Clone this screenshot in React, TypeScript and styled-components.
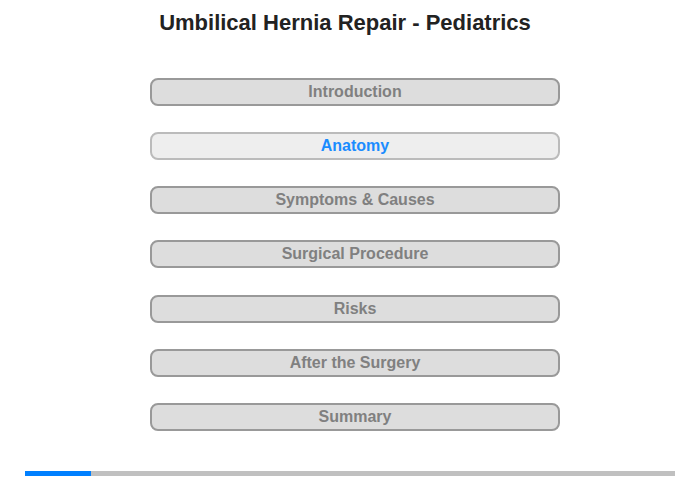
import styled, { createGlobalStyle } from "styled-components";

type Section = {
  title: string;
  active?: boolean;
};

const SECTIONS: Section[] = [
  { title: "Introduction" },
  { title: "Anatomy", active: true },
  { title: "Symptoms & Causes" },
  { title: "Surgical Procedure" },
  { title: "Risks" },
  { title: "After the Surgery" },
  { title: "Summary" },
];

const PROGRESS = 66 / 650;

const GlobalStyle = createGlobalStyle`
  body {
    margin: 0;
    background: #ffffff;
    font-family: "Liberation Sans", Arial, sans-serif;
  }
`;

export default function App() {
  return (
    <Page>
      <GlobalStyle />
      <Title>Umbilical Hernia Repair - Pediatrics</Title>
      <Menu>
        {SECTIONS.map((s) => (
          <MenuButton key={s.title} $active={!!s.active}>
            {s.title}
          </MenuButton>
        ))}
      </Menu>
      <ProgressTrack>
        <ProgressFill style={{ width: `${PROGRESS * 100}%` }} />
      </ProgressTrack>
    </Page>
  );
}

const Page = styled.div`
  width: 700px;
  height: 480px;
  display: flex;
  flex-direction: column;
  align-items: center;
`;

const Title = styled.h1`
  margin: 11px 10px 0 0;
  font-size: 22px;
  line-height: 24px;
  font-weight: bold;
  color: #222222;
`;

const Menu = styled.div`
  margin: 43px 0 0 10px;
  display: flex;
  flex-direction: column;
  gap: 26.17px;
`;

const MenuButton = styled.div<{ $active: boolean }>`
  box-sizing: border-box;
  width: 410px;
  height: 28px;
  border: 2px solid ${(p) => (p.$active ? "#bbbbbb" : "#999999")};
  border-radius: 8px;
  background: ${(p) => (p.$active ? "#eeeeee" : "#dddddd")};
  color: ${(p) => (p.$active ? "#1a8cff" : "#808080")};
  font-size: 16px;
  font-weight: bold;
  line-height: 24px;
  text-align: center;
  cursor: pointer;
`;

const ProgressTrack = styled.div`
  margin-top: auto;
  margin-bottom: 4px;
  width: 650px;
  height: 5px;
  background: #c0c0c0;
`;

const ProgressFill = styled.div`
  height: 100%;
  background: #0080ff;
`;
